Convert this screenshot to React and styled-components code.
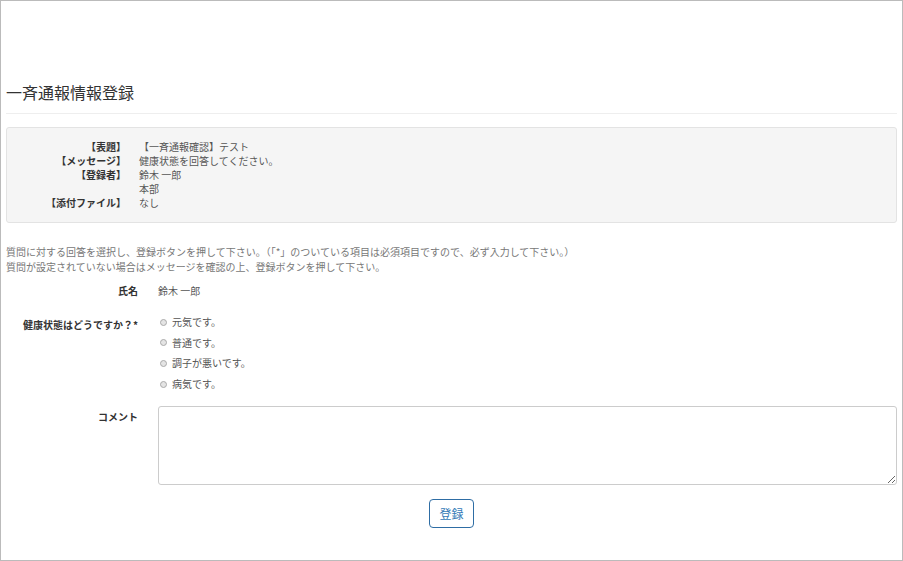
import React from "react";
import styled, { createGlobalStyle } from "styled-components";

const GlobalStyle = createGlobalStyle`
  html, body {
    margin: 0;
    padding: 0;
    background: #fff;
  }
  body {
    font-family: "Noto Sans CJK JP", "Noto Sans", "Liberation Sans", sans-serif;
    font-size: 10px;
    color: #333;
  }
  * { box-sizing: border-box; }
`;

const info = [
  { label: "【表題】", value: ["【一斉通報確認】テスト"] },
  { label: "【メッセージ】", value: ["健康状態を回答してください。"] },
  { label: "【登録者】", value: ["鈴木 一郎", "本部"] },
  { label: "【添付ファイル】", value: ["なし"] },
];

const choices = ["元気です。", "普通です。", "調子が悪いです。", "病気です。"];

export default function App() {
  return (
    <>
      <GlobalStyle />
      <Page>
        <Title>一斉通報情報登録</Title>
        <Rule />
        <InfoBox>
          {info.map((row) => (
            <React.Fragment key={row.label}>
              <InfoLabel>{row.label}</InfoLabel>
              <InfoValue>
                {row.value.map((v) => (
                  <div key={v}>{v}</div>
                ))}
              </InfoValue>
            </React.Fragment>
          ))}
        </InfoBox>
        <Notes>
          <p>
            質問に対する回答を選択し、登録ボタンを押して下さい。（「*」のついている項目は必須項目ですので、必ず入力して下さい。）
          </p>
          <p>質問が設定されていない場合はメッセージを確認の上、登録ボタンを押して下さい。</p>
        </Notes>
        <Form>
          <FormRow>
            <FormLabel>氏名</FormLabel>
            <FormValue>鈴木 一郎</FormValue>
          </FormRow>
          <FormRow $gap={14}>
            <FormLabel $top={6}>健康状態はどうですか？*</FormLabel>
            <RadioList>
              {choices.map((c) => (
                <RadioItem key={c}>
                  <RadioDot />
                  {c}
                </RadioItem>
              ))}
            </RadioList>
          </FormRow>
          <FormRow $gap={12}>
            <FormLabel $top={4}>コメント</FormLabel>
            <Comment />
          </FormRow>
          <ButtonRow>
            <SubmitButton>登録</SubmitButton>
          </ButtonRow>
        </Form>
      </Page>
    </>
  );
}

const Page = styled.div`
  height: 561px;
  border: 1px solid #bbb;
  padding: 81px 5px 0 5px;
  overflow: hidden;
`;

const Title = styled.h1`
  margin: 0;
  font-size: 16px;
  line-height: 20px;
  font-weight: normal;
  color: #333;
`;

const Rule = styled.hr`
  margin: 11px 0 13px;
  border: 0;
  border-top: 1px solid #eee;
`;

const InfoBox = styled.div`
  display: grid;
  grid-template-columns: 119px 1fr;
  column-gap: 13px;
  padding: 12px 0;
  background: #f5f5f5;
  border: 1px solid #e3e3e3;
  border-radius: 3px;
  line-height: 14px;
`;

const InfoLabel = styled.div`
  text-align: right;
  font-weight: bold;
  color: #333;
`;

const InfoValue = styled.div`
  color: #555;
`;

const Notes = styled.div`
  margin-top: 21px;
  color: #777;
  line-height: 15px;

  p {
    margin: 0;
  }
`;

const Form = styled.div`
  margin-top: 10px;
`;

const FormRow = styled.div`
  display: grid;
  grid-template-columns: 132px 1fr;
  column-gap: 20px;
  margin-top: ${(p) => p.$gap || 0}px;
  line-height: 14px;
`;

const FormLabel = styled.div`
  text-align: right;
  font-weight: bold;
  color: #333;
  padding-top: ${(p) => p.$top || 0}px;
`;

const FormValue = styled.div`
  color: #555;
`;

const RadioList = styled.div`
  display: flex;
  flex-direction: column;
  padding-left: 2px;
`;

const RadioItem = styled.label`
  display: flex;
  align-items: center;
  height: 20.6px;
  color: #555;
`;

const RadioDot = styled.span`
  width: 7px;
  height: 7px;
  border-radius: 50%;
  border: 1px solid #aaa;
  background: #e4e4e4;
  margin-right: 5px;
`;

const Comment = styled.textarea`
  display: block;
  width: 100%;
  height: 79px;
  border: 1px solid #ccc;
  border-radius: 3px;
  resize: vertical;
  font: inherit;
`;

const ButtonRow = styled.div`
  display: flex;
  justify-content: center;
  margin-top: 14px;
`;

const SubmitButton = styled.button`
  width: 45px;
  height: 29px;
  padding: 0;
  background: #fff;
  border: 1px solid #2e6da4;
  border-radius: 4px;
  color: #337ab7;
  font-family: inherit;
  font-size: 12px;
  cursor: pointer;
`;
